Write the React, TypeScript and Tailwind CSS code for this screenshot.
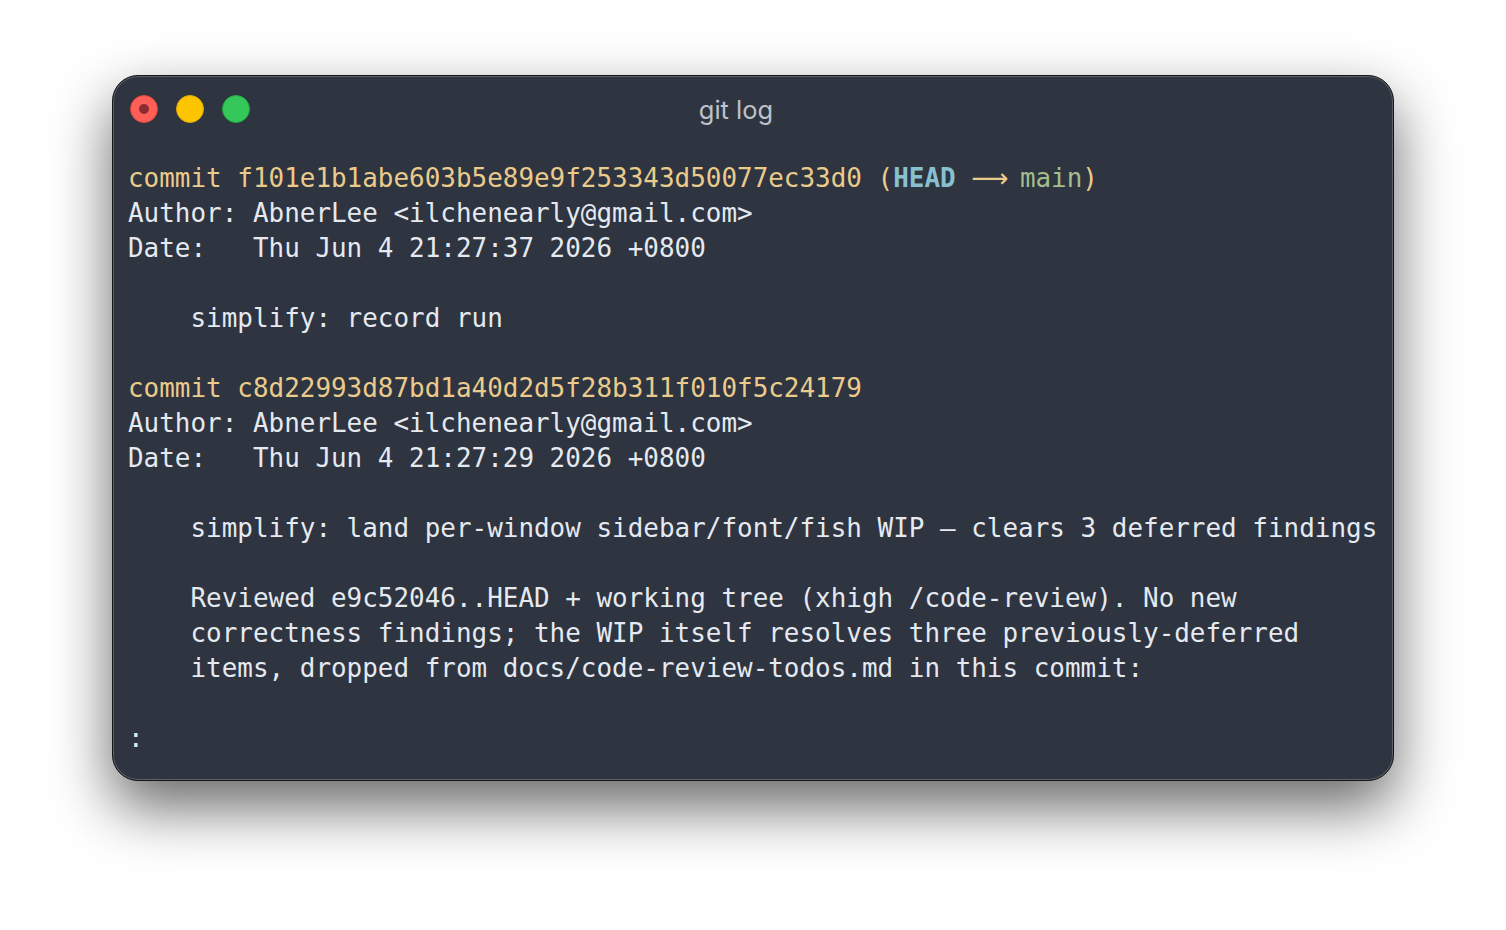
import React from 'react';

const Line = ({ children }: { children?: React.ReactNode }) => (
  <div className="h-[35px] leading-[35px] whitespace-pre">{children ?? ' '}</div>
);

export default function App() {
  return (
    <div className="min-h-[930px] w-full bg-white flex justify-center pt-[75px]">
      <div className="w-[1282px] h-[706px] rounded-[26px] bg-[#2e3440] border border-[#151515] shadow-[inset_0_0_0_1px_rgba(255,255,255,0.22),0_26px_60px_rgba(0,0,0,0.6)] flex flex-col">
        {/* Title bar */}
        <div className="relative h-[66px] flex items-center px-[17px] shrink-0">
          <div className="flex items-center gap-[18px]">
            <div className="w-[28px] h-[28px] rounded-full bg-[#ff5f57] border border-[#e0443e] flex items-center justify-center">
              <div className="w-[10px] h-[10px] rounded-full bg-[#8c2a33]" />
            </div>
            <div className="w-[28px] h-[28px] rounded-full bg-[#fdc400] border border-[#e0a800]" />
            <div className="w-[28px] h-[28px] rounded-full bg-[#34c759] border border-[#22a83f]" />
          </div>
          <div className="absolute inset-0 flex items-center justify-center pt-[2px] pr-[34px] text-[25.5px] text-[#bcc1ca] font-['Inter',sans-serif]">
            git log
          </div>
        </div>

        {/* Terminal content */}
        <div className="pt-[19px] pl-[15px] text-[25.95px] text-[#e5e9f0] font-['DejaVu_Sans_Mono','Liberation_Mono',monospace]">
          <Line>
            <span className="text-[#ebcb8b]">commit f101e1b1abe603b5e89e9f253343d50077ec33d0 (</span>
            <span className="text-[#88c0d0] font-bold">HEAD</span>
            <span className="text-[#ebcb8b]"> </span>
            <span className="inline-block w-[2ch] text-center text-[#ebcb8b] font-['DejaVu_Sans',sans-serif]">⟶</span>
            <span className="text-[#ebcb8b]"> </span>
            <span className="text-[#a3be8c]">main</span>
            <span className="text-[#ebcb8b]">)</span>
          </Line>
          <Line>Author: AbnerLee &lt;ilchenearly@gmail.com&gt;</Line>
          <Line>Date:   Thu Jun 4 21:27:37 2026 +0800</Line>
          <Line />
          <Line>    simplify: record run</Line>
          <Line />
          <Line>
            <span className="text-[#ebcb8b]">commit c8d22993d87bd1a40d2d5f28b311f010f5c24179</span>
          </Line>
          <Line>Author: AbnerLee &lt;ilchenearly@gmail.com&gt;</Line>
          <Line>Date:   Thu Jun 4 21:27:29 2026 +0800</Line>
          <Line />
          <Line>    simplify: land per-window sidebar/font/fish WIP — clears 3 deferred findings</Line>
          <Line />
          <Line>    Reviewed e9c52046..HEAD + working tree (xhigh /code-review). No new</Line>
          <Line>    correctness findings; the WIP itself resolves three previously-deferred</Line>
          <Line>    items, dropped from docs/code-review-todos.md in this commit:</Line>
          <Line />
          <Line>:</Line>
        </div>
      </div>
    </div>
  );
}
